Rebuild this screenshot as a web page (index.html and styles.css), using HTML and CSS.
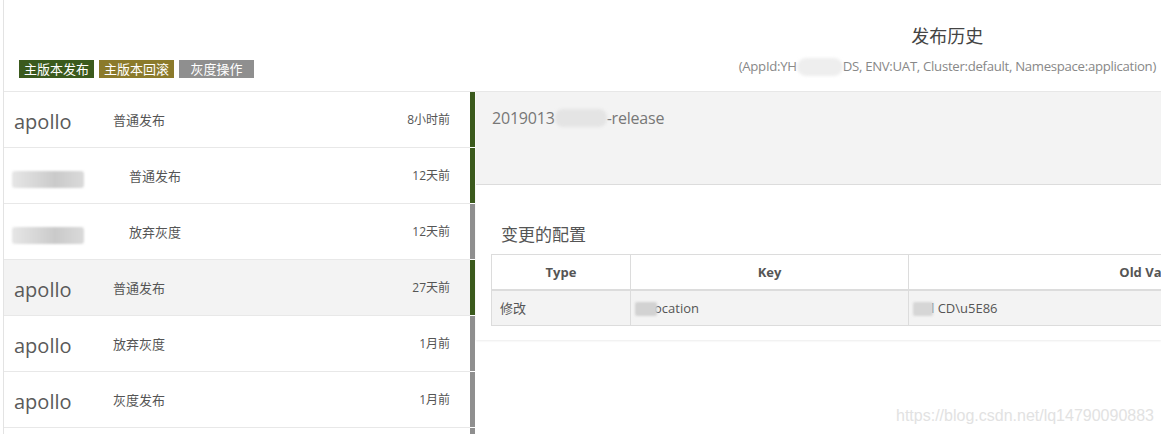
FILE: index.html
```html
<!DOCTYPE html>
<html lang="zh">
<head>
<meta charset="utf-8">
<title>发布历史</title>
<link rel="stylesheet" href="styles.css">
</head>
<body>
<div class="page">
  <header class="header">
    <div class="actions">
      <span class="tag tag-main">主版本发布</span>
      <span class="tag tag-rollback">主版本回滚</span>
      <span class="tag tag-gray">灰度操作</span>
    </div>
    <div class="titles">
      <div class="title">发布历史</div>
      <div class="subtitle">(AppId:YH<span class="mask mask-sub"></span>DS, ENV:UAT, Cluster:default, Namespace:application)</div>
    </div>
  </header>
  <div class="main">
    <ul class="list">
      <li class="row">
        <div class="row-body"><span class="name">apollo</span><span class="op">普通发布</span><span class="time">8小时前</span></div>
        <span class="bar bar-main"></span>
      </li>
      <li class="row">
        <div class="row-body"><span class="name name-mask"><span class="mask mask-name"></span></span><span class="op">普通发布</span><span class="time">12天前</span></div>
        <span class="bar bar-main"></span>
      </li>
      <li class="row">
        <div class="row-body"><span class="name name-mask"><span class="mask mask-name"></span></span><span class="op">放弃灰度</span><span class="time">12天前</span></div>
        <span class="bar bar-gray"></span>
      </li>
      <li class="row row-selected">
        <div class="row-body"><span class="name">apollo</span><span class="op">普通发布</span><span class="time">27天前</span></div>
        <span class="bar bar-main"></span>
      </li>
      <li class="row">
        <div class="row-body"><span class="name">apollo</span><span class="op">放弃灰度</span><span class="time">1月前</span></div>
        <span class="bar bar-gray"></span>
      </li>
      <li class="row">
        <div class="row-body"><span class="name">apollo</span><span class="op">灰度发布</span><span class="time">1月前</span></div>
        <span class="bar bar-gray"></span>
      </li>
      <li class="row">
        <div class="row-body"></div>
        <span class="bar bar-gray"></span>
      </li>
    </ul>
    <section class="detail">
      <div class="release-head">2019013<span class="mask mask-release"></span>-release</div>
      <div class="changes">
        <h3 class="changes-title">变更的配置</h3>
        <table class="table">
          <colgroup>
            <col class="c-type"><col class="c-key"><col class="c-old"><col class="c-new">
          </colgroup>
          <thead>
            <tr><th>Type</th><th>Key</th><th>Old Value</th><th>New Value</th></tr>
          </thead>
          <tbody>
            <tr>
              <td>修改</td>
              <td><span class="mask mask-key"></span>ocation</td>
              <td><span class="mask mask-old"></span>l CD\u5E86</td>
              <td></td>
            </tr>
          </tbody>
        </table>
      </div>
    </section>
  </div>
  <div class="watermark">https://blog.csdn.net/lq14790090883</div>
</div>
</body>
</html>
```
FILE: styles.css
```css
* { box-sizing: border-box; }
html, body {
  margin: 0;
  padding: 0;
  background: #fff;
  overflow: hidden;
}
body {
  width: 1161px;
  height: 434px;
  font-family: "Open Sans", "Noto Sans CJK SC", sans-serif;
  color: #555;
}
.page {
  position: relative;
  margin-left: 3px;
  height: 434px;
  border-left: 1px solid #e3e3e3;
  overflow: hidden;
}
.header {
  height: 92px;
  display: flex;
  justify-content: space-between;
  align-items: flex-end;
  border-bottom: 1px solid #e8e8e8;
}
.actions {
  display: flex;
  gap: 5px;
  padding-left: 15px;
  padding-bottom: 13px;
}
.tag {
  display: block;
  width: 75px;
  height: 18px;
  line-height: 18px;
  font-size: 13px;
  color: #fff;
  text-align: center;
}
.tag-main { background: #3b5a1d; }
.tag-rollback { background: #8b7a2b; }
.tag-gray { background: #8f8f8f; }
.titles {
  text-align: center;
  padding-right: 5px;
  padding-bottom: 15px;
}
.title {
  font-size: 18px;
  line-height: 24px;
  color: #444;
  margin-bottom: 8px;
}
.subtitle {
  font-size: 13.2px;
  line-height: 20px;
  color: #888;
  letter-spacing: -0.3px;
}
.mask {
  display: inline-block;
  vertical-align: middle;
  border-radius: 8px;
  filter: blur(1.5px);
}
.mask-sub {
  width: 46px;
  height: 18px;
  background: #eeeeee;
  border-radius: 9px;
}
.main {
  display: flex;
  align-items: flex-start;
}
.list {
  list-style: none;
  margin: 0;
  padding: 0;
  width: 471px;
  flex: none;
}
.row {
  display: flex;
  height: 56px;
}
.row-body {
  flex: 1;
  display: flex;
  align-items: center;
  padding-left: 10px;
  padding-right: 20px;
  border-bottom: 1px solid #e8e8e8;
}
.row-selected .row-body { background: #f3f3f3; }
.name {
  width: 99px;
  flex: none;
  font-size: 20px;
  color: #5a5a5a;
  padding-top: 3px;
}
.name-mask { width: 115px; padding-top: 4px; }
.mask-name {
  width: 72px;
  height: 17px;
  margin-left: -2px;
  background: linear-gradient(90deg, #e6e6e6, #d4d4d4 40%, #cacaca 60%, #dadada);
  border-radius: 3px;
  filter: blur(1px);
}
.op {
  flex: 1;
  font-size: 13px;
  color: #555;
}
.time {
  font-size: 12px;
  color: #555;
  padding-bottom: 2px;
}
.bar {
  width: 5px;
  flex: none;
  margin-bottom: 1px;
}
.bar-main { background: #3b5a1d; }
.bar-gray { background: #8f8f8f; }
.detail {
  flex: 1;
  min-width: 0;
  margin-left: 1px;
  box-shadow: 0 1px 2px rgba(0,0,0,0.08);
}
.release-head {
  height: 93px;
  background: #f3f3f3;
  border-bottom: 1px solid #dcdcdc;
  padding: 14px 16px 0;
  font-size: 16px;
  line-height: 24px;
  color: #777;
  white-space: nowrap;
  letter-spacing: -0.2px;
}
.mask-release {
  width: 52px;
  height: 18px;
  background: #e4e4e4;
  margin-top: -3px;
}
.changes {
  padding: 38px 0 14px 15px;
}
.changes-title {
  margin: 0 0 7px 10px;
  font-size: 17px;
  line-height: 24px;
  font-weight: normal;
  color: #555;
}
.table {
  border-collapse: collapse;
  table-layout: fixed;
  width: 1300px;
  font-size: 13px;
}
.c-type { width: 139px; }
.c-key { width: 278px; }
.c-old { width: 484px; }
.c-new { width: 399px; }
.table th, .table td {
  border: 1px solid #dcdcdc;
  padding: 0 8px;
  color: #555;
  white-space: nowrap;
  overflow: hidden;
}
.table th {
  height: 35px;
  font-weight: bold;
  text-align: center;
  border-bottom: 2px solid #dcdcdc;
}
.table td {
  height: 36px;
  background: #f3f3f3;
}
.mask-key {
  width: 22px;
  height: 14px;
  margin-left: -4px;
  margin-right: -3px;
  background: #d2d2d2;
  border-radius: 2px;
  filter: blur(1px);
}
.mask-old {
  width: 20px;
  height: 14px;
  margin-left: -4px;
  margin-right: -2px;
  background: #d6d6d6;
  border-radius: 2px;
  filter: blur(1px);
}
.watermark {
  position: absolute;
  right: 7px;
  bottom: 9px;
  font-family: "Liberation Sans", Arial, sans-serif;
  font-size: 16px;
  color: #e2e2e2;
}
```
